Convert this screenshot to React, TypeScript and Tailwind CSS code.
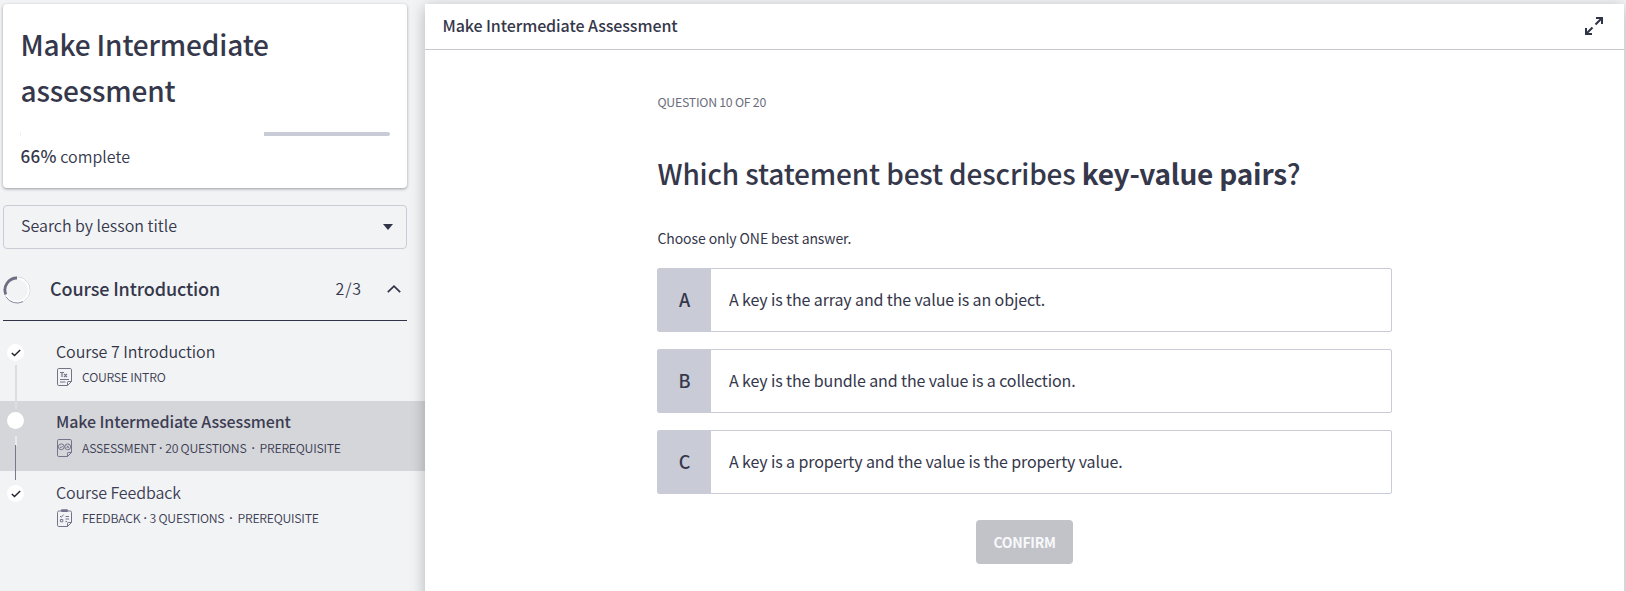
import React from 'react';

type IconKind = 'text' | 'quiz' | 'survey';

function LessonIcon({ kind }: { kind: IconKind }) {
  return (
    <svg width="15" height="18" viewBox="0 0 15 18" fill="none" stroke="#73738a" strokeWidth="1" className="shrink-0">
      {kind === 'survey' ? (
        <>
          <path d="M4 2H2.2C1.2 2 .5 2.4 .5 3.4V16.2C.5 17 1 17.5 1.8 17.5H10.5L14.5 13.5V3.4C14.5 2.4 14 2 12.8 2H11" />
          <path d="M4.5 .8H10.5V2.5H4.5Z" fill="#73738a" />
          <path d="M3 7L4.3 8.3L6.6 5.6M8.5 7.5H12M3.4 10.5H5.8V12.8H3.4ZM8.5 10H12M8.5 12.5H10" />
        </>
      ) : (
        <path d="M1.8 .5H13.2C14 .5 14.5 1 14.5 1.8V13.5L10.5 17.5H1.8C1 17.5 .5 17 .5 16.2V1.8C.5 1 1 .5 1.8 .5Z" />
      )}
      <path d="M10.5 17.5V14.2C10.5 13.8 10.8 13.5 11.2 13.5H14.5" />
      {kind === 'text' && (
        <>
          <path d="M3 4.5H7M5 4.5V9M7 6L10 9M10 6L7 9" strokeWidth="1.2" />
          <path d="M3 11.5H12M3 14H8.5" />
        </>
      )}
      {kind === 'quiz' && (
        <>
          <circle cx="4.3" cy="7.8" r="2.9" />
          <circle cx="10.7" cy="7.8" r="2.9" />
          <path d="M2.9 7.8L4 8.8L5.8 6.8M9.6 6.7L11.8 8.9M11.8 6.7L9.6 8.9" />
        </>
      )}
    </svg>
  );
}

function Dot({ className }: { className: string }) {
  return <span className={`font-['Open_Sans',sans-serif] leading-none font-semibold ${className}`}>·</span>;
}

function Status({ done, className }: { done?: boolean; className: string }) {
  return (
    <span className={`absolute left-[7px] flex h-[17px] w-[17px] items-center justify-center rounded-full bg-white ${className}`}>
      {done && (
        <svg width="10" height="8" viewBox="0 0 10 8" fill="none" stroke="#22232f" strokeWidth="1.5">
          <path d="M.8 4L3.5 6.5L9.2 1" />
        </svg>
      )}
    </span>
  );
}

const answers = [
  { letter: 'A', text: 'A key is the array and the value is an object.' },
  { letter: 'B', text: 'A key is the bundle and the value is a collection.' },
  { letter: 'C', text: 'A key is a property and the value is the property value.' },
];

function Sidebar() {
  return (
    <aside className="flex w-[425px] shrink-0 flex-col pt-1">
      <section className="ml-[3px] h-[184px] w-[404px] rounded bg-white px-[17px] pt-[17px] shadow-[0_1px_3px_rgba(40,45,55,0.45)]">
        <h1 className="ml-[0.5px] w-[300px] text-[28px] leading-[46px] font-medium tracking-[-0.16px]">Make Intermediate assessment</h1>
        <div className="mt-[19px] flex h-1 justify-between">
          <div className="h-1 w-px bg-[#f1f1f4]" />
          <div className="h-1 w-[126px] rounded-r-sm bg-[#c9cbd6]" />
        </div>
        <p className="mt-2 ml-[0.5px] text-base leading-6 tracking-[0.02px]">
          <span className="text-[17px] font-medium tracking-[0.3px]">66%</span> <span className="font-[350]">complete</span>
        </p>
      </section>

      <div className="mt-[17px] ml-[3px] flex h-11 w-[404px] items-center justify-between rounded border border-[#c9cbd6] pr-[13px] pb-1 pl-[17px] text-base leading-6 font-[350]">
        <span>Search by lesson title</span>
        <svg width="10" height="6" viewBox="0 0 10 6" className="mt-1"><path d="M0 0H10L5 6Z" fill="#313347" /></svg>
      </div>

      <div className="mt-[9px] ml-[3px] flex h-[63px] w-[404px] items-center border-b border-[#313347]">
        <svg width="28" height="28" viewBox="0 0 28 28" fill="none" className="mt-px shrink-0">
          <circle cx="14" cy="14" r="12.8" stroke="#b9bac6" strokeWidth="1" />
          <circle cx="14" cy="14" r="11.8" stroke="#fff" strokeWidth="2" />
          <path d="M3 20.8A13 13 0 0 0 20 25.6" stroke="#8d8ea0" strokeWidth="1" />
          <path d="M14 2A12 12 0 0 0 2.8 18.4" stroke="#6d6e84" strokeWidth="2.8" />
        </svg>
        <h2 className="mb-[2px] ml-[19px] text-lg leading-6 font-medium tracking-[-0.12px]">Course Introduction</h2>
        <span className="mr-[25px] mb-[2px] ml-auto text-base leading-6 font-[350] tracking-[0.9px]">2/3</span>
        <svg width="14" height="8" viewBox="0 0 14 8" fill="none" stroke="#313347" strokeWidth="1.7" className="mr-[6px] mb-px">
          <path d="M.8 7.2L7 1.2L13.2 7.2" />
        </svg>
      </div>

      <ul className="mt-[10px] font-[350] text-[#3c3d53]">
        <li className="relative h-[70px] pt-2 pl-[56px]">
          <Status done className="top-[13px]" />
          <h3 className="text-base leading-6 tracking-[-0.04px] text-[#313347]">Course 7 Introduction</h3>
          <div className="mt-1 flex h-5 items-center pl-px text-[12.3px] tracking-[-0.25px]">
            <LessonIcon kind="text" />
            <span className="ml-[10px]">COURSE INTRO</span>
          </div>
        </li>
        <li className="relative h-[70px] bg-[#d5d6da] pt-2 pl-[56px]">
          <span className="absolute -top-[36px] left-[15px] h-[44px] w-[2px] bg-[#dcdde1]" />
          <Status className="top-[11px]" />
          <span className="absolute top-[35px] left-[15px] h-[10px] w-[2px] bg-[#e9eaec]" />
          <span className="absolute top-[44px] left-[15px] h-[35px] w-px bg-[#77788c]" />
          <h3 className="text-base leading-6 font-medium tracking-[-0.1px]">Make Intermediate Assessment</h3>
          <div className="mt-[5px] flex h-5 items-center pl-px text-[12.3px] leading-5 tracking-[-0.25px] whitespace-pre">
            <LessonIcon kind="quiz" />
            <span className="ml-[10px]">ASSESSMENT<Dot className="mx-[3px]" />20 QUESTIONS<Dot className="mx-[5px]" />PREREQUISITE</span>
          </div>
        </li>
        <li className="relative h-[70px] pt-[9px] pl-[56px]">
          <Status done className="top-[14px]" />
          <h3 className="text-base leading-6 tracking-[-0.1px]">Course Feedback</h3>
          <div className="mt-[4px] flex h-5 items-center pl-px text-[12.3px] leading-5 tracking-[-0.25px] whitespace-pre">
            <LessonIcon kind="survey" />
            <span className="ml-[10px]">FEEDBACK<Dot className="mx-[3px]" />3 QUESTIONS<Dot className="mx-[5px]" />PREREQUISITE</span>
          </div>
        </li>
      </ul>
    </aside>
  );
}

export default function App() {
  return (
    <div className="flex h-[591px] w-[1626px] overflow-hidden bg-[#f1f3f5] font-['Noto_Sans_CJK_SC',sans-serif] text-[#35374b]">
      <Sidebar />
      <main className="relative z-10 mt-1 h-[620px] w-[1199px] bg-white shadow-[0_3px_14px_rgba(0,0,0,0.26)]">
        <header className="flex h-[46px] items-center justify-between border-b border-[#c8c9ce] pr-[20px] pb-[2px] pl-[17px]">
          <h2 className="mb-[2px] ml-[0.5px] text-base leading-6 font-medium tracking-[-0.09px]">Make Intermediate Assessment</h2>
          <svg width="20" height="20" viewBox="0 0 20 20" fill="none" stroke="#313347" strokeWidth="2">
            <path d="M12 2H18V8M18 2L11.5 8.5M8 18H2V12M2 18L8.5 11.5" />
          </svg>
        </header>
        <div className="ml-[232px] w-[735px] pt-[42px]">
          <p className="ml-[0.5px] text-[12.3px] leading-5 tracking-[-0.25px] text-[#6c6d7c]">QUESTION 10 OF 20</p>
          <h1 className="mt-[41px] ml-[0.5px] text-[28px] leading-10 font-medium tracking-[-0.15px]">
            Which statement best describes <b className="font-bold tracking-[-0.2px]">key-value pairs</b>?
          </h1>
          <p className="mt-[33px] ml-[0.5px] text-sm leading-6 tracking-[-0.1px]">Choose only ONE best answer.</p>
          <div className="mt-[18px] flex flex-col gap-[17px]">
            {answers.map((a) => (
              <div key={a.letter} className="flex h-16 overflow-hidden rounded-xs border border-[#c9cbd6]">
                <span className="flex w-[53px] items-center justify-center bg-[#c9cbd6] pb-[2px] text-lg leading-6 font-medium">{a.letter}</span>
                <span className="flex items-center pb-[2px] pl-[18px] text-base leading-6 tracking-[-0.12px]">{a.text}</span>
              </div>
            ))}
          </div>
          <div className="mt-[26px] flex justify-center">
            <button className="h-11 w-[97px] rounded bg-[#c2c3c9] text-sm font-bold tracking-[-0.3px] text-[#f8f8fa]">CONFIRM</button>
          </div>
        </div>
      </main>
    </div>
  );
}
